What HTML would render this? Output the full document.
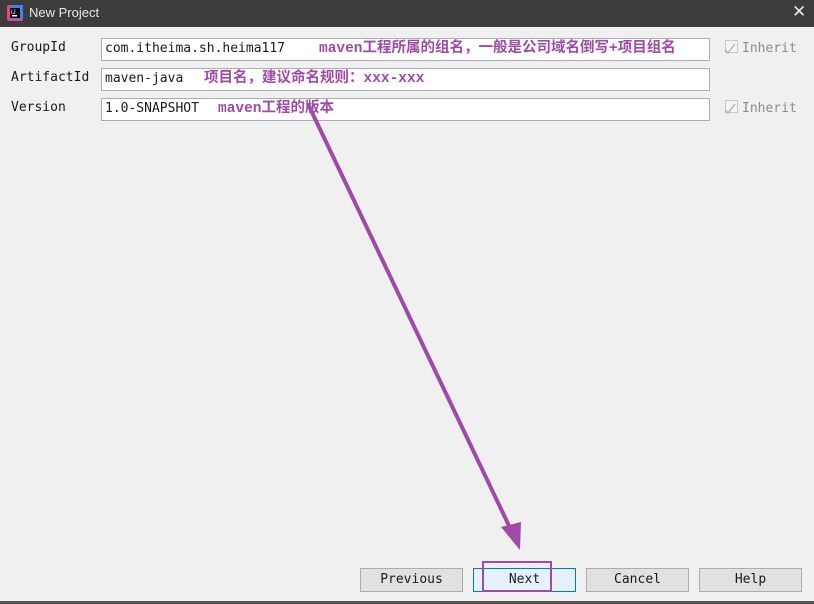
<!DOCTYPE html><html><head><meta charset="utf-8"><style>
body{margin:0;width:814px;height:604px;background:#f0f0f0;position:relative;overflow:hidden;font-family:"DejaVu Sans Mono","Liberation Mono",monospace;font-size:13px;color:#1a1a1a}
.title{position:absolute;left:0;top:0;width:814px;height:27px;background:#3c3c3c;color:#e8e8e8;font-family:"Liberation Sans",sans-serif;font-size:13px}
.lbl{position:absolute;left:11px}
.in{position:absolute;left:101px;width:607px;height:21px;border:1px solid #abadb3;background:#fff;box-sizing:content-box}
.in span{position:absolute;left:3px;top:-1px;line-height:21px;white-space:nowrap}
.ann{position:absolute;top:0;line-height:21px;color:#a04aa8;font-weight:bold;font-family:"Liberation Mono","Noto Sans CJK SC",monospace;font-size:14.5px;white-space:nowrap}
.inh{position:absolute;left:725px;color:#8c8c8c}
.cb{display:inline-block;width:11px;height:11px;border:1px solid #c8c8c8;background:#f4f4f4;vertical-align:-1px;margin-right:4px;position:relative}
.btn{position:absolute;top:568px;width:101px;height:22px;border:1px solid #adadad;background:#e1e1e1;text-align:center;line-height:22px}
</style></head><body>
<div class="title"><svg style="position:absolute;left:7px;top:5px" width="16" height="16"><rect x="0" y="0" width="16" height="16" rx="2" fill="#e8467c"/><rect x="4" y="0" width="12" height="14" fill="#3b82f6"/><rect x="3" y="3" width="10" height="10" fill="#000"/><rect x="5" y="10" width="5" height="1.5" fill="#fff"/><text x="4" y="9" fill="#fff" font-size="6" font-family="Liberation Sans">IJ</text></svg><span style="position:absolute;left:29px;top:5px">New Project</span><span style="position:absolute;left:792px;top:2px;font-size:17px">✕</span></div>
<div class="lbl" style="top:40px">GroupId</div>
<div class="lbl" style="top:70px">ArtifactId</div>
<div class="lbl" style="top:100px">Version</div>
<div class="in" style="top:38px"><span>com.itheima.sh.heima117</span><b class="ann" style="left:217px">maven工程所属的组名，一般是公司域名倒写+项目组名</b></div>
<div class="in" style="top:68px"><span>maven-java</span><b class="ann" style="left:102px">项目名，建议命名规则：xxx-xxx</b></div>
<div class="in" style="top:98px"><span>1.0-SNAPSHOT</span><b class="ann" style="left:116px">maven工程的版本</b></div>
<div class="inh" style="top:40px"><span class="cb"></span>Inherit</div>
<div class="inh" style="top:100px"><span class="cb"></span>Inherit</div>
<svg style="position:absolute;left:0;top:0" width="814" height="604"><line x1="308" y1="104" x2="512" y2="532" stroke="#a04aa8" stroke-width="4"/><polygon points="520,550 501,527 521,522" fill="#a04aa8"/>
<polyline points="725,50 728,53 735,44" fill="none" stroke="#b0b0b0" stroke-width="1.3"/><polyline points="725,110 728,113 735,104" fill="none" stroke="#b0b0b0" stroke-width="1.3"/></svg>
<div class="btn" style="left:360px">Previous</div>
<div class="btn" style="left:473px;background:#e5f1fb;border-color:#0078d7">Next</div>
<div class="btn" style="left:586px">Cancel</div>
<div class="btn" style="left:699px">Help</div>
<div style="position:absolute;left:482px;top:561px;width:66px;height:27px;border:2px solid #a04aa8"></div>
<div style="position:absolute;left:0;top:601px;width:814px;height:3px;background:#555"></div>
</body></html>
